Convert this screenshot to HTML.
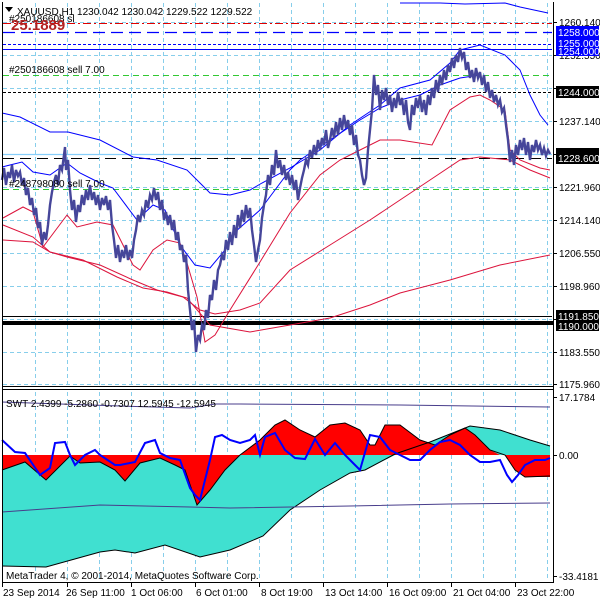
<!DOCTYPE html><html><head><style>
body{margin:0;background:#fff;width:600px;height:600px;overflow:hidden}
svg{display:block;font-family:"Liberation Sans",sans-serif;font-size:10px}
</style></head><body>
<svg width="600" height="600" viewBox="0 0 600 600" xmlns="http://www.w3.org/2000/svg">
<rect width="600" height="600" fill="#fff"/>
<g stroke="#87CEEB" stroke-dasharray="4,3" stroke-width="1">
<path d="M35.5 3V386M67.5 3V386M99.5 3V386M131.5 3V386M163.5 3V386M195.5 3V386M227.5 3V386M259.5 3V386M291.5 3V386M323.5 3V386M355.5 3V386M387.5 3V386M419.5 3V386M451.5 3V386M483.5 3V386M515.5 3V386M547.5 3V386"/>
<path d="M35.5 392V581M67.5 392V581M99.5 392V581M131.5 392V581M163.5 392V581M195.5 392V581M227.5 392V581M259.5 392V581M291.5 392V581M323.5 392V581M355.5 392V581M387.5 392V581M419.5 392V581M451.5 392V581M483.5 392V581M515.5 392V581M547.5 392V581"/>
<path d="M3 22.5H552M3 55.5H552M3 88.5H552M3 121.5H552M3 187.5H552M3 220.5H552M3 253.5H552M3 286.5H552M3 319.5H552M3 352.5H552M3 384.5H552"/>
</g>
<path d="M3 23.5H552" stroke="#e00000" stroke-dasharray="8,3,2,3"/>
<path d="M3 32.5H552" stroke="#0000ff" stroke-width="1.3" stroke-dasharray="12,6"/>
<path d="M3 44.5H552" stroke="#0000ff" stroke-dasharray="3,2"/>
<path d="M3 49.5H552" stroke="#0000ff"/>
<path d="M3 75.5H552" stroke="#32c832" stroke-dasharray="6,4"/>
<path d="M3 92.5H552" stroke="#000" stroke-dasharray="3,2"/>
<path d="M3 154.5H552" stroke="#87CEFA" stroke-width="1.2"/>
<path d="M3 158.5H552" stroke="#000" stroke-dasharray="11,6"/>
<path d="M3 189.5H552" stroke="#32c832" stroke-dasharray="6,4"/>
<path d="M3 316.5H552" stroke="#000"/>
<rect x="3" y="321" width="550" height="4" fill="#000"/>
<g fill="none" stroke="#0000ff" stroke-width="1">
<polyline points="400,3 440,3 465,4 505,3 520,7 548,13"/>
<polyline points="2,113 20,117 50,132 68,132 100,140 133,157 157,160 187,170 200,183 210,193 230,195 250,190 262,183 290,168 320,150 350,125 380,105 400,88 430,80 450,63 460,50 480,45 505,55 520,70 530,95 540,115 548,125"/>
<polyline points="2,167 10,165 22,162 33,172 50,175 67,163 80,173 100,183 113,188 137,220 153,205 165,210 180,245 195,265 210,268 225,250 235,232 260,210 275,190 290,170 300,160 330,140 360,120 380,108 400,100 420,95 440,85 460,78 480,75"/>
</g>
<g fill="none" stroke="#dc143c" stroke-width="1">
<polyline points="3,218 23,207 33,212 43,247 67,215 77,227 97,222 113,225 133,265 140,270 153,250 167,240 180,243 187,263 197,297 205,342 215,335 230,310 260,262 290,213 320,175 340,160 360,150 380,140 400,140 432,145 450,110 470,97 480,95 490,100 505,110 510,150 520,160 540,168 550,170"/>
<polyline points="3,225 33,237 50,252 67,257 100,265 133,280 157,290 183,297 200,310 215,314 240,310 260,303 290,270 330,245 370,220 400,200 430,180 460,160 480,157 510,160 530,170 550,178"/>
<polyline points="3,240 33,242 50,252 83,260 117,277 143,288 167,292 187,298 210,325 250,332 290,325 330,318 370,305 400,293 450,280 500,265 550,255"/>
</g>
<polyline fill="none" stroke="#46469a" stroke-width="2.4" points="2,180 4,168 6,185 8,172 10,178 12,165 14,182 16,170 18,176 20,172 22,185 24,178 26,195 28,188 30,205 32,198 34,215 36,208 38,228 40,222 42,245 44,232 46,240 48,225 50,205 52,192 54,182 56,175 58,185 60,165 62,170 64,155 65,147 66,170 68,160 70,190 72,210 74,200 76,222 78,205 80,212 82,195 84,205 86,190 88,200 90,185 92,200 94,192 96,205 98,195 100,210 102,198 104,205 106,196 108,210 110,200 112,225 114,240 116,258 118,245 120,262 122,250 124,258 126,245 128,260 130,250 132,258 134,240 136,230 138,215 140,222 142,210 144,215 146,200 148,208 150,195 152,200 154,188 156,200 158,192 160,210 162,200 164,220 166,212 168,225 170,215 172,230 174,220 176,240 178,232 180,250 182,245 184,262 186,255 188,290 190,310 192,330 194,320 196,352 198,335 200,340 202,325 204,330 206,310 208,318 210,295 212,300 214,280 216,290 218,270 220,265 222,255 224,260 226,240 228,250 230,232 232,245 234,225 236,238 238,215 240,228 242,210 244,222 246,205 248,218 250,208 252,230 254,245 256,262 258,250 260,240 262,218 264,205 266,195 268,175 270,185 272,165 274,175 276,150 278,168 280,160 282,175 284,165 286,180 288,172 290,185 292,175 294,190 296,180 298,200 300,188 302,178 304,170 306,160 308,165 310,150 312,158 314,145 316,155 318,140 320,150 322,138 324,145 326,130 328,148 330,140 332,128 334,138 336,122 338,135 340,118 342,130 344,115 346,128 348,120 350,135 352,125 354,145 356,135 358,155 360,160 362,175 364,185 366,178 368,150 370,130 372,110 374,75 376,95 378,85 380,110 382,90 384,100 386,88 388,105 390,95 392,112 394,98 396,108 398,92 400,105 402,98 404,115 406,100 408,122 410,130 412,105 414,115 416,98 418,108 420,95 422,112 424,100 426,115 428,95 430,105 432,88 434,98 436,80 438,92 440,75 442,85 444,70 446,80 448,65 450,72 452,58 454,68 456,55 458,62 460,48 462,58 464,52 466,70 468,62 470,78 472,70 474,82 476,68 478,78 480,72 482,85 484,75 486,92 488,82 490,98 492,90 494,102 496,95 498,105 500,100 502,112 504,108 506,125 508,140 510,162 512,150 514,165 516,145 518,155 520,140 522,150 524,138 526,155 528,142 530,160 532,145 534,152 536,140 538,150 540,145 542,155 544,148 546,156 548,150 550,154"/>
<path d="M5 7h8l-4 5z" fill="#000"/>
<text x="17" y="15">XAUUSD,H1  1230.042 1230.042 1229.522 1229.522</text>
<text x="9" y="22">#250186608 sl</text>
<text x="11" y="30" font-size="15" font-weight="bold" fill="#b22222">25.1889</text>
<text x="9" y="73">#250186608 sell 7.00</text>
<text x="9" y="187">#248798080 sell 7.00</text>
<path d="M2 455H240L225 470 210 490 197 505 185 470 175 465 160 458 140 463 125 481 115 470 100 462 80 463 70 456 46 480 25 462 2 470Z" fill="#ff0000"/>
<path d="M2 470 25 462 46 480 70 456 80 463 100 462 115 470 125 481 140 463 160 458 175 465 185 470 197 505 210 490 225 470 240 455 H395 L430 442 470 426 500 430 530 440 550 446 V455 H510 L395 455 365 470 350 473 320 490 290 510 263 536 230 550 200 557 165 545 135 553 115 550 100 552 46 567 2 566Z" fill="#40e0d0"/>
<path d="M240 455 260 440 275 425 285 420 300 430 315 437 330 425 345 423 360 430 370 445 375 445 385 425 400 425 420 440 435 445 450 435 465 428 475 435 490 450 500 455Z" fill="#ff0000"/>
<path d="M505 455 H550 V477 H525 L515 470Z" fill="#ff0000"/>
<g fill="none" stroke="#000" stroke-width="1">
<polyline points="2,566 46,567 100,552 115,550 135,553 165,545 200,557 230,550 263,536 290,510 320,490 350,473 365,470 395,454 430,442 470,426 500,430 530,440 550,446"/>
<polyline points="2,470 25,462 46,480 70,456 80,463 100,462 115,470 125,481 140,463 160,458 175,465 185,470 197,505 210,490 225,470 240,455 260,440 275,425 285,420 300,430 315,437 330,425 345,423 360,430 370,445 375,445 385,425 400,425 420,440 435,445 450,435 465,428 475,435 490,450 505,455 515,470 525,477 550,476"/>
</g>
<g fill="none" stroke="#483d8b" stroke-width="1">
<polyline points="2,402 60,404 120,406 190,408 215,404 240,404 400,405 550,407"/>
<polyline points="2,512 100,505 190,507 230,508 350,506 450,504 550,503"/>
</g>
<polyline fill="none" stroke="#0000ff" stroke-width="2" points="2,440 15,452 25,453 40,475 50,468 55,443 65,442 70,455 75,465 85,455 95,450 100,455 115,465 120,465 135,462 145,443 155,440 160,453 170,458 180,460 190,488 195,495 200,500 210,460 215,437 222,435 230,440 240,443 250,440 255,435 260,455 265,437 275,433 285,450 295,458 305,459 315,439 325,455 335,443 345,455 355,465 360,470 370,435 380,437 390,450 400,455 410,460 420,460 430,450 440,442 450,440 460,445 470,455 480,462 490,462 500,460 507,475 512,482 518,475 525,465 535,460 545,460 550,458"/>
<text x="6" y="407">SWT 2.4399 -5.2860 -0.7307 12.5945 -12.5945</text>
<text x="6" y="579">MetaTrader 4, © 2001-2014, MetaQuotes Software Corp.</text>
<g fill="none" stroke="#000">
<path d="M2.5 2V582.5H553.5V2"/>
<path d="M2 386.5H553M2 389.5H553"/>
</g>
<g stroke="#000"><path d="M553 22.5h4M553 55.5h4M553 88.5h4M553 121.5h4M553 154.5h4M553 187.5h4M553 220.5h4M553 253.5h4M553 286.5h4M553 319.5h4M553 352.5h4M553 384.5h4M553 397.5h4M553 455.5h4M553 576.5h4"/>
<path d="M2.5 583v4M67.5 583v4M131.5 583v4M195.5 583v4M259.5 583v4M323.5 583v4M387.5 583v4M451.5 583v4M515.5 583v4"/></g>
<g fill="#000">
<text x="559" y="26">1260.140</text>
<text x="559" y="59">1252.550</text>
<text x="559" y="125">1237.140</text>
<text x="559" y="191">1221.960</text>
<text x="559" y="224">1214.140</text>
<text x="559" y="257">1206.550</text>
<text x="559" y="290">1198.960</text>
<text x="559" y="356">1183.550</text>
<text x="559" y="388">1175.960</text>
<text x="559" y="401">17.1784</text>
<text x="559" y="459">0.00</text>
<text x="559" y="580">-33.4181</text>
</g>
<rect x="556" y="26" width="43" height="12" fill="#0000ff"/><text x="558" y="36" fill="#fff">1258.000</text>
<rect x="556" y="38" width="43" height="18" fill="#0000ff"/><text x="558" y="47" fill="#fff">1255.000</text><text x="558" y="55" fill="#fff">1254.000</text>
<rect x="556" y="86" width="43" height="12" fill="#000"/><text x="558" y="96" fill="#fff">1244.000</text>
<rect x="556" y="148" width="43" height="6" fill="#000"/>
<rect x="556" y="152" width="43" height="12" fill="#000"/><text x="558" y="162" fill="#fff">1228.600</text>
<rect x="556" y="310" width="43" height="21" fill="#000"/><text x="558" y="320" fill="#fff">1191.850</text><text x="558" y="330" fill="#fff">1190.000</text>
<g fill="#000">
<text x="3" y="596">23 Sep 2014</text>
<text x="66" y="596">26 Sep 11:00</text>
<text x="131" y="596">1 Oct 06:00</text>
<text x="196" y="596">6 Oct 01:00</text>
<text x="261" y="596">8 Oct 19:00</text>
<text x="325" y="596">13 Oct 14:00</text>
<text x="389" y="596">16 Oct 09:00</text>
<text x="453" y="596">21 Oct 04:00</text>
<text x="517" y="596">23 Oct 22:00</text>
</g>
</svg>
</body></html>
